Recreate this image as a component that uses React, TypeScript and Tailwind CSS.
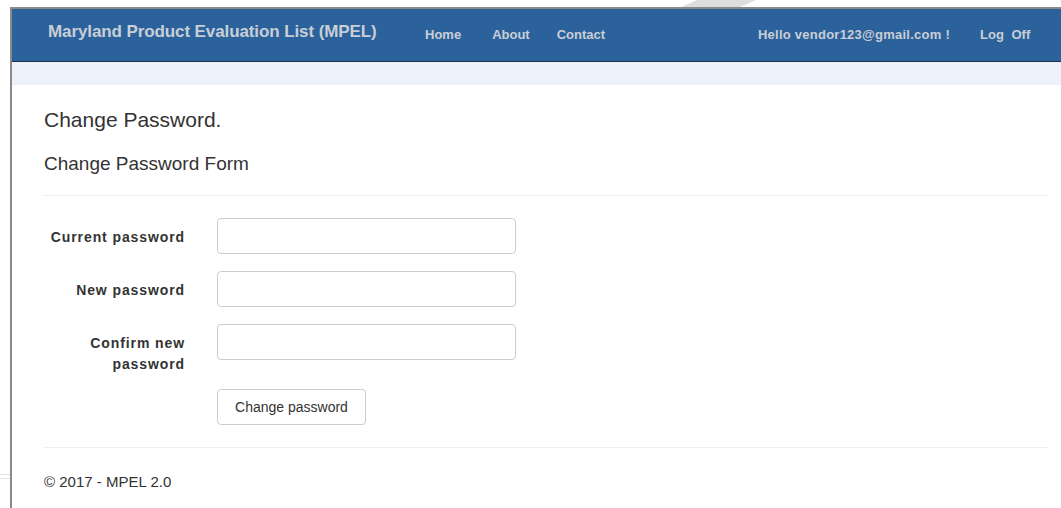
import { useState } from 'react';

const fields = [
  { id: 'old', label: 'Current password' },
  { id: 'new', label: 'New password' },
  { id: 'confirm', label: 'Confirm new password' },
];

const App = () => {
  const [values, setValues] = useState<Record<string, string>>({});

  return (
    <div className="min-h-[508px] bg-white text-[#333] font-['Liberation_Sans',Arial,sans-serif]">
      {/* strip above the window frame */}
      <div className="h-[7px] relative">
        <svg className="absolute left-[680px] top-0" width="80" height="7" viewBox="0 0 80 7">
          <polygon points="17,0 76,0 60,7 1,7" fill="#dedede" />
        </svg>
      </div>

      <div className="flex">
        <div className="w-[10px] shrink-0 relative">
          <div className="absolute left-0 top-[467px] w-[10px] h-px bg-[#e4e4e4]" />
          <div className="absolute left-0 top-[471px] w-[10px] h-px bg-[#e4e4e4]" />
        </div>

        <div className="flex-1 border-t-2 border-l-2 border-[#8a8a8a] min-h-[501px]">
          <nav className="h-[53px] bg-[#2b629c] border-b border-[#1f3147] flex items-start pl-[36px] pr-[30px] text-[#c9ced6]">
            <div className="w-[377px] shrink-0 pt-[13px] text-[17px] leading-[20px] font-bold tracking-[-0.1px]">
              Maryland Product Evaluation List (MPEL)
            </div>
            <div className="flex pt-[16px] text-[13px] leading-[20px] font-bold">
              <a className="cursor-pointer">Home</a>
              <a className="cursor-pointer ml-[31px]">About</a>
              <a className="cursor-pointer ml-[27px]">Contact</a>
            </div>
            <div className="ml-auto flex pt-[16px] text-[13px] leading-[20px] font-bold">
              <span className="tracking-[0.25px]">Hello vendor123@gmail.com !</span>
              <a className="cursor-pointer ml-[30px] w-[51px] [word-spacing:4px]">Log Off</a>
            </div>
          </nav>
          <div className="h-[23px] bg-[#edf2fa]" />

          <div className="pl-[32px] pr-[13px]">
            <h2 className="mt-[23px] text-[21px] leading-[24px]">Change Password.</h2>
            <h4 className="mt-[21px] text-[19px] leading-[22px]">Change Password Form</h4>
            <hr className="mt-[20px] border-t border-[#eeeeee]" />

            <form className="mt-[22px]" onSubmit={(e) => e.preventDefault()}>
              {fields.map((field, index) => (
                <div
                  key={field.id}
                  className={`flex items-start ${index === 2 ? 'mb-[14px]' : 'mb-[17px]'}`}
                >
                  <label
                    htmlFor={field.id}
                    className="w-[141px] shrink-0 pt-[9px] pl-[6px] text-right text-[14px] leading-[21px] font-bold tracking-[0.9px] text-[#333]"
                  >
                    {field.label}
                  </label>
                  <input
                    id={field.id}
                    type="password"
                    value={values[field.id] ?? ''}
                    onChange={(e) => setValues({ ...values, [field.id]: e.target.value })}
                    className="ml-[32px] w-[299px] h-[36px] rounded-[4px] border border-[#cccccc] bg-white px-3 text-[14px] outline-none"
                  />
                </div>
              ))}
              <div className="pl-[173px]">
                <button
                  type="submit"
                  className="w-[149px] h-[36px] rounded-[4px] border border-[#cccccc] bg-white text-[14px] text-[#333]"
                >
                  Change password
                </button>
              </div>
            </form>

            <hr className="mt-[22px] border-t border-[#eeeeee]" />
            <footer className="mt-[24px] text-[15px] leading-[20px]">© 2017 - MPEL 2.0</footer>
          </div>
        </div>
      </div>
    </div>
  );
};

export default App;
